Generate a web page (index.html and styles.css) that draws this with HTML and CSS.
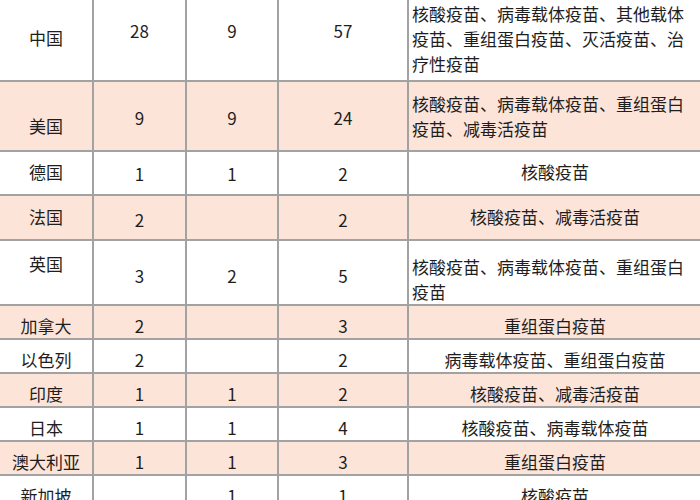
FILE: index.html
```html
<!DOCTYPE html>
<html lang="zh-CN">
<head>
<meta charset="utf-8">
<title>疫苗统计</title>
<link rel="stylesheet" href="styles.css">
</head>
<body>
<table class="vac">
  <colgroup>
    <col class="c1"><col class="c2"><col class="c3"><col class="c4"><col class="c5">
  </colgroup>
  <tbody>
    <tr class="h90">
      <td class="pt4">中国</td>
      <td class="pb10">28</td>
      <td class="pb10">9</td>
      <td class="pb10">57</td>
      <td class="multi pt6">核酸疫苗、病毒载体疫苗、其他载体疫苗、重组蛋白疫苗、灭活疫苗、治疗性疫苗</td>
    </tr>
    <tr class="h70 pink">
      <td class="pt19">美国</td>
      <td class="pt3">9</td>
      <td class="pt3">9</td>
      <td class="pt3">24</td>
      <td class="multi">核酸疫苗、病毒载体疫苗、重组蛋白疫苗、减毒活疫苗</td>
    </tr>
    <tr class="h44">
      <td class="pb4">德国</td>
      <td>1</td>
      <td>1</td>
      <td>2</td>
      <td class="pb4">核酸疫苗</td>
    </tr>
    <tr class="h45 pink">
      <td class="pb3">法国</td>
      <td class="pt4">2</td>
      <td></td>
      <td class="pt4">2</td>
      <td class="pb3">核酸疫苗、减毒活疫苗</td>
    </tr>
    <tr class="h65">
      <td class="pb19">英国</td>
      <td class="pt5">3</td>
      <td class="pt5">2</td>
      <td class="pt5">5</td>
      <td class="multi bottom">核酸疫苗、病毒载体疫苗、重组蛋白疫苗</td>
    </tr>
    <tr class="s pink">
      <td>加拿大</td>
      <td>2</td>
      <td></td>
      <td>3</td>
      <td>重组蛋白疫苗</td>
    </tr>
    <tr class="s">
      <td>以色列</td>
      <td>2</td>
      <td></td>
      <td>2</td>
      <td>病毒载体疫苗、重组蛋白疫苗</td>
    </tr>
    <tr class="s pink">
      <td>印度</td>
      <td>1</td>
      <td>1</td>
      <td>2</td>
      <td>核酸疫苗、减毒活疫苗</td>
    </tr>
    <tr class="s">
      <td>日本</td>
      <td>1</td>
      <td>1</td>
      <td>4</td>
      <td>核酸疫苗、病毒载体疫苗</td>
    </tr>
    <tr class="s pink">
      <td>澳大利亚</td>
      <td>1</td>
      <td>1</td>
      <td>3</td>
      <td>重组蛋白疫苗</td>
    </tr>
    <tr class="s">
      <td>新加坡</td>
      <td></td>
      <td>1</td>
      <td>1</td>
      <td>核酸疫苗</td>
    </tr>
  </tbody>
</table>
</body>
</html>
```
FILE: styles.css
```css
html, body {
  margin: 0;
  padding: 0;
  background: #ffffff;
  overflow: hidden;
}

body {
  width: 700px;
  height: 500px;
}

.vac {
  border-collapse: collapse;
  table-layout: fixed;
  width: 703px;
  margin: -11px 0 0 -2px;
  font-family: "Noto Sans CJK SC", "Noto Sans", sans-serif;
  font-size: 17px;
  line-height: 25px;
  color: #1e1e1e;
}

.c1 { width: 94px; }
.c2 { width: 93px; }
.c3 { width: 92px; }
.c4 { width: 130px; }
.c5 { width: 294px; }

.vac td {
  border: 2px solid #a2a2a2;
  padding: 0 3px;
  text-align: center;
  vertical-align: middle;
  white-space: normal;
}

.vac tr.pink td { background: #fde4d9; }

.h90 { height: 91px; }
.h70 { height: 70px; }
.h44 { height: 44px; }
.h45 { height: 45px; }
.h65 { height: 65px; }
.s { height: 34px; }

.s td { padding-top: 6px; }

.vac td.multi {
  text-align: left;
  padding-left: 3px;
  padding-right: 4px;
}

.vac td.bottom { vertical-align: bottom; }

.vac td.pt3 { padding-top: 3px; }
.vac td.pt4 { padding-top: 4px; }
.vac td.pt5 { padding-top: 5px; }
.vac td.pt6 { padding-top: 6px; }
.vac td.pt19 { padding-top: 19px; }
.vac td.pb3 { padding-bottom: 3px; }
.vac td.pb4 { padding-bottom: 4px; }
.vac td.pb10 { padding-bottom: 10px; }
.vac td.pb19 { padding-bottom: 19px; }
```
